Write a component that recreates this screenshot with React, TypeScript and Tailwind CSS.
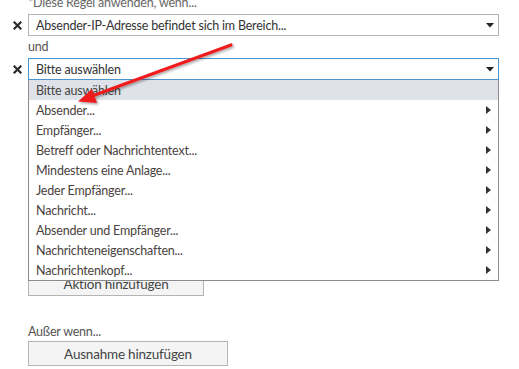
const menuItems = [
  'Absender...',
  'Empfänger...',
  'Betreff oder Nachrichtentext...',
  'Mindestens eine Anlage...',
  'Jeder Empfänger...',
  'Nachricht...',
  'Absender und Empfänger...',
  'Nachrichteneigenschaften...',
  'Nachrichtenkopf...',
];

function RemoveIcon() {
  return (
    <svg width="9" height="9" viewBox="0 0 9 9" className="block">
      <path d="M1.5 1.5 L7.5 7.5 M7.5 1.5 L1.5 7.5" stroke="#2b2b2b" strokeWidth="2.2" strokeLinecap="square" />
    </svg>
  );
}

function Caret() {
  return (
    <svg width="8" height="5" viewBox="0 0 8 5" className="block">
      <path d="M0 0 H8 L4 4.5 Z" fill="#222" />
    </svg>
  );
}

function SubArrow() {
  return (
    <svg width="5" height="8" viewBox="0 0 5 8" className="block">
      <path d="M0 0 V8 L5 4 Z" fill="#333" />
    </svg>
  );
}

function SelectRow({ label, active }: { label: string; active?: boolean }) {
  return (
    <div className="flex items-center">
      <div className="w-[28px] flex justify-center pl-[6px]">
        <RemoveIcon />
      </div>
      <div
        className={`w-[471px] h-[22px] flex items-center justify-between pl-[7px] pr-[4px] bg-white border ${
          active ? 'border-[#4a94d0]' : 'border-[#b4b4b4]'
        }`}
      >
        <span className="text-[#333] pt-[1px]">{label}</span>
        <Caret />
      </div>
    </div>
  );
}

export default function App() {
  return (
    <div
      className="relative w-[519px] h-[369px] overflow-hidden bg-white text-[12.5px] leading-[16px] tracking-[-0.2px]"
      style={{ fontFamily: 'Lato, "Open Sans", Arial, sans-serif' }}
    >
      <div className="pl-[28px] -mt-[5px] h-[19px] text-[#666]">*Diese Regel anwenden, wenn...</div>

      <SelectRow label="Absender-IP-Adresse befindet sich im Bereich..." />

      <div className="pl-[28px] h-[22px] leading-[22px] text-[#555]">und</div>

      <SelectRow label="Bitte auswählen" active />

      {/* verdeckter Bereich unter dem Menü */}
      <div className="pl-[28px] pt-[172px]">
        <div className="pl-[28px] text-[#666] h-[20px]">Folgendes ausführen...</div>
        <button className="w-[176px] h-[24px] border border-[#b4b4b4] bg-[#f4f4f4] text-[#444] text-[13.5px]">
          Aktion hinzufügen
        </button>
      </div>

      <div className="pl-[28px] mt-[27px] h-[17px] leading-[17px] text-[#555]">Außer wenn...</div>
      <div className="pl-[28px] mt-[1px]">
        <button className="w-[200px] h-[25px] border border-[#b4b4b4] bg-[#f4f4f4] text-[#444] text-[13.5px]">
          Ausnahme hinzufügen
        </button>
      </div>

      {/* Dropdown-Menü */}
      <div className="absolute left-[28px] top-[80px] w-[471px] border border-[#8c8c8c] border-t-0 bg-white">
        <div className="h-[20px] flex items-center pl-[7px] pt-[1px] bg-[#dfe2e8] text-[#444]">Bitte auswählen</div>
        {menuItems.map((item) => (
          <div key={item} className="h-[20px] flex items-center justify-between pl-[7px] pr-[7px] text-[#4a4340]">
            <span className="pt-[2px]">{item}</span>
            <SubArrow />
          </div>
        ))}
      </div>

      {/* roter Pfeil */}
      <svg className="absolute left-0 top-0 pointer-events-none" width="519" height="369">
        <defs>
          <filter id="sh" x="-20%" y="-20%" width="140%" height="140%">
            <feDropShadow dx="1.5" dy="1.5" stdDeviation="1.2" floodColor="#000" floodOpacity="0.35" />
          </filter>
        </defs>
        <g filter="url(#sh)">
          <line x1="231" y1="45" x2="92" y2="96" stroke="#ee1c1c" strokeWidth="3.2" strokeLinecap="round" />
          <path d="M78 101.5 L92 89 L97 103 Z" fill="#ee1c1c" />
        </g>
      </svg>
    </div>
  );
}
